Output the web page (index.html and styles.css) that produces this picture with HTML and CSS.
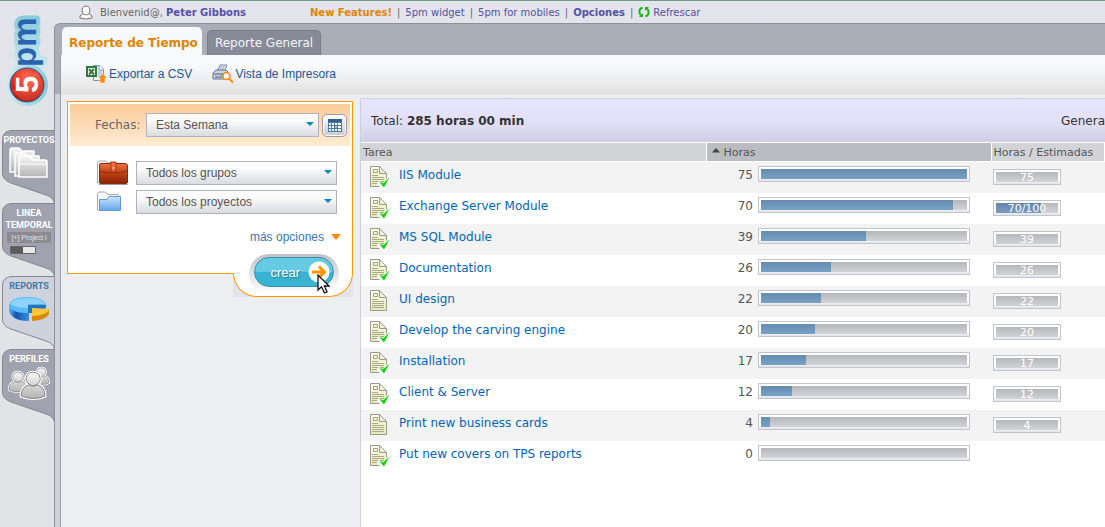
FILE: index.html
```html
<!DOCTYPE html>
<html lang="es">
<head>
<meta charset="utf-8">
<title>5pm - Reporte de Tiempo</title>
<link rel="stylesheet" href="styles.css">
</head>
<body>
<svg class="defs" width="0" height="0" aria-hidden="true">
  <defs>
    <linearGradient id="paper" x1="0" y1="0" x2="0" y2="1"><stop offset="0" stop-color="#fdfdea"/><stop offset="1" stop-color="#e6e8b8"/></linearGradient>
    <linearGradient id="metal" x1="0" y1="0" x2="0" y2="1"><stop offset="0" stop-color="#f6f6f6"/><stop offset="1" stop-color="#b4b4b4"/></linearGradient>
    <linearGradient id="sky" x1="0" y1="0" x2="0" y2="1"><stop offset="0" stop-color="#cfe6ff"/><stop offset="1" stop-color="#63a4e8"/></linearGradient>
    <linearGradient id="rust" x1="0" y1="0" x2="0" y2="1"><stop offset="0" stop-color="#f07a45"/><stop offset="0.5" stop-color="#c03f14"/><stop offset="1" stop-color="#8a2406"/></linearGradient>
    <linearGradient id="halo" x1="0" y1="0" x2="1" y2="0"><stop offset="0" stop-color="#cfeaf2"/><stop offset="1" stop-color="#86cbdc"/></linearGradient>
    <linearGradient id="blueside" x1="0" y1="0" x2="1" y2="0"><stop offset="0" stop-color="#66b4f4"/><stop offset="0.35" stop-color="#1550ae"/><stop offset="1" stop-color="#3c8fe0"/></linearGradient>
    <radialGradient id="red" cx="0.5" cy="0.25" r="0.8"><stop offset="0" stop-color="#ff6a50"/><stop offset="0.6" stop-color="#e02818"/><stop offset="1" stop-color="#b01008"/></radialGradient>
    <path id="tabshape" d="M55 0.500H11Q2.500 1.500 2.500 9.500V43Q2.500 50 11 53L46 65Q53 67 54.500 73H55Z"/>
    <g id="doc">
      <path d="M1.500 1.500H10.500L17.500 8.500V21.500H1.500Z" fill="url(#paper)" stroke="#9a9a92"/>
      <path d="M10.500 1.500V8.500H17.500Z" fill="#f2f3d8" stroke="#9a9a92"/>
      <path d="M4.500 4.500H8.500V7.500H4.500Z" fill="none" stroke="#a0a086"/>
      <path d="M3 10.500H9M3 12.500H15M3 14.500H15M3 16.500H15M3 18.500H15" stroke="#a9aa8a"/>
    </g>
    <g id="donedoc">
      <use href="#doc"/>
      <path d="M10 17L14 20L20 12V18L15 24L9 19Z" fill="#fff" stroke="#fff" stroke-width="2"/>
      <path d="M10 16.500L14 18.500L20.500 12.500L15 22.500Z" fill="#0bd20b"/>
    </g>
    <g id="person">
      <path d="M1 20Q1 12 8 11Q4 8 5 5Q6 1 10 1Q15 1 16 5Q17 9 13 11Q20 12 20 20Q11 24 1 20Z" fill="url(#metal)" stroke="#fff" stroke-width="2.500"/>
      <path d="M1 20Q1 12 8 11Q4 8 5 5Q6 1 10 1Q15 1 16 5Q17 9 13 11Q20 12 20 20Q11 24 1 20Z" fill="url(#metal)" stroke="#777" stroke-width=".7"/>
      <path d="M8 11Q10.500 13 13 11" fill="none" stroke="#888"/>
    </g>
  </defs>
</svg>
<div class="app">
  <aside class="sidebar">
    <a class="logo" href="#" aria-label="5pm">
      <svg width="50" height="96" viewBox="0 0 50 96">
        <g class="mark">
          <text class="mark-halo" transform="translate(36 56) rotate(-90)">pm</text>
          <circle cx="27" cy="74" r="21" fill="url(#halo)"/>
          <text class="mark-blue" transform="translate(36 56) rotate(-90)">pm</text>
          <circle cx="27" cy="74" r="17" fill="url(#red)" stroke="#1b5a9c"/>
          <path d="M12 80Q24 76 36 60Q46 70 42 82Q34 92 22 89Z" fill="#fff" opacity=".12"/>
          <text class="mark-five" transform="translate(38 82) rotate(-90)">5</text>
        </g>
      </svg>
    </a>
    <nav class="modules">
      <a class="module" href="#">
        <svg class="module-shape" width="55" height="73"><use href="#tabshape"/></svg>
        <span class="module-body"><span>PROYECTOS</span>
          <svg width="42" height="34" viewBox="0 0 42 34"><g fill="url(#metal)" stroke="#fff" stroke-width="1.500">
            <path d="M2 26V4Q2 2 4 2H11L14 5H26V26Z"/><path d="M7 30V9Q7 7 9 7H16L19 10H31V30Z"/><path d="M11 31V13Q11 10 14 10H21L25 14H37Q39 14 39 16V31Z"/></g>
            <path d="M11 18H39" stroke="#fff"/></svg></span>
      </a>
      <a class="module" href="#">
        <svg class="module-shape" width="55" height="73"><use href="#tabshape"/></svg>
        <span class="module-body"><span>LINEA<br>TEMPORAL</span>
          <span class="timeline">[+] Project i</span>
          <svg width="42" height="10" viewBox="0 0 42 10"><path d="M2.500 1.500H27.500V8.500H2.500Z" fill="#e8e8e8" stroke="#666"/><path d="M3 2H15V8H3Z" fill="#5c5c5c"/></svg></span>
      </a>
      <a class="module module-current" href="#" aria-current="page">
        <svg class="module-shape" width="55" height="73"><use href="#tabshape"/></svg>
        <span class="module-body"><span>REPORTS</span>
          <svg width="42" height="34" viewBox="0 0 42 34">
            <path d="M1 13V20Q5 29 21 29V17Z" fill="url(#blueside)"/>
            <path d="M1 13Q3 5 19 5Q36 5 38 13L20 13V21Q2 21 1 13Z" fill="#58baf8"/>
            <path d="M2 12Q5 6 19 6Q34 6 37 12L20 12V16Q8 16 2 12Z" fill="#8cd4ff"/>
            <path d="M20 13H38V16L26 21H20Z" fill="#2472c4"/>
            <path d="M24 17L41 18V22Q38 28 24 29Z" fill="#d98900"/><path d="M24 16L41 17Q40 23 24 24Z" fill="#ffc63a"/></svg></span>
      </a>
      <a class="module" href="#">
        <svg class="module-shape" width="55" height="73"><use href="#tabshape"/></svg>
        <span class="module-body"><span>PERFILES</span>
          <svg width="44" height="36" viewBox="0 0 44 36"><use href="#person" transform="translate(26 2) scale(.8)"/><use href="#person" transform="translate(1 6) scale(.95)"/><use href="#person" transform="translate(13 6) scale(1.250)"/></svg></span>
      </a>
    </nav>
  </aside>

  <div class="main">
    <header class="topbar">
      <svg width="14" height="15" viewBox="0 0 14 15"><path d="M1 13V11L4 8.500Q2.500 6 3.500 3Q5 1 7 1Q9 1 10.500 3Q11.500 6 10 8.500L13 11V13Q7 15 1 13Z" fill="#fafafa" stroke="#777"/><path d="M4 9Q7 11 10 9" fill="none" stroke="#888"/></svg>
      <p class="welcome">Bienvenid@, <a href="#"><b>Peter Gibbons</b></a></p>
      <nav class="toplinks">
        <a class="hot" href="#">New Features!</a><i>|</i><a href="#">5pm widget</a><i>|</i><a href="#">5pm for mobiles</a><i>|</i><a href="#"><b>Opciones</b></a><i>|</i><a class="refresh" href="#"><svg width="12" height="12" viewBox="0 0 12 12"><path d="M4.500 1.500Q1 3 1.500 6Q1.500 8 3 9.500M7.500 10.500Q11 9 10.500 6Q10.500 4 9 2.500" fill="none" stroke="#1bb51b" stroke-width="2"/><path d="M1 11H5V7ZM11 1H7V5Z" fill="#1bb51b"/></svg>Refrescar</a>
      </nav>
    </header>

    <div class="workspace">
      <nav class="tabs">
        <a class="tab tab-current" href="#" aria-current="page">Reporte de Tiempo</a>
        <a class="tab" href="#">Reporte General</a>
      </nav>
      <div class="content">
        <div class="toolbar">
          <a href="#"><svg width="22" height="20" viewBox="0 0 22 20"><path d="M7.500 1.500H14L17.500 5V16.500H7.500Z" fill="#e7effa" stroke="#7d93b8"/><path d="M13 1V6H18" fill="#fff" stroke="#7d93b8"/><path d="M12 8H16M12 10H16M12 12H16" stroke="#8eb0dc"/><path d="M0 2H11V13H0Z" fill="#2f7a3a"/><path d="M2 4H9V11H2Z" fill="#fff"/><path d="M3 5L8 10.500M8 5L3 10.500" stroke="#2f7a3a" stroke-width="2"/><path d="M16.500 9.500L21 14H19V19H14V14H12Z" fill="#ff8a00" stroke="#fff" stroke-width=".5"/></svg>Exportar a CSV</a>
          <a href="#"><svg width="22" height="20" viewBox="0 0 22 20"><path d="M5 8L8 1H15L12 8Z" fill="#f5f9ff" stroke="#6f86a8"/><path d="M8 3H13M7 5H12" stroke="#8aa3c8"/><path d="M1 9L4 6H14L16 8V13L13 15H1Z" fill="#c9d3e2" stroke="#66728a"/><path d="M2 10H13M3 13H10" stroke="#56617a"/><path d="M9 10H12V12H9Z" fill="#36c836"/><circle cx="14.500" cy="12" r="3.500" fill="#fff" stroke="#ff8a00" stroke-width="1.500"/><path d="M17 14.500L21 18.500" stroke="#ff8a00" stroke-width="2"/></svg>Vista de Impresora</a>
        </div>

        <div class="columns">
          <form class="filter">
            <div class="filter-box">
              <div class="dates">
                <label for="dates">Fechas:</label>
                <span class="drop"><select id="dates"><option>Esta Semana</option></select></span>
                <button class="calendar" type="button" aria-label="Calendario"><svg width="14" height="13" viewBox="0 0 14 13"><path d="M0 0H14V13H0Z" fill="#4a7aa6"/><path d="M0 0H14V3H0Z" fill="#33608e"/><path d="M1 4H3V6H1ZM4 4H6V6H4ZM7 4H9V6H7ZM10 4H13V6H10ZM1 7H3V9H1ZM4 7H6V9H4ZM10 7H13V9H10ZM1 10H3V12H1ZM4 10H6V12H4ZM7 10H9V12H7ZM10 10H13V12H10Z" fill="#fff"/><path d="M7 7H9V9H7Z" fill="#9fc0de"/></svg></button>
              </div>
              <div class="choices">
                <div class="choice">
                  <svg width="32" height="26" viewBox="0 0 32 26"><path d="M.5 23V3Q1 1 3 1H9L11 3H17V23Z" fill="#f5f5f5" stroke="#aaa"/><path d="M2 24H30L31 25H2Z" fill="#999"/><path d="M2.500 5Q2.500 3.500 4 3.500H12L14 2.500H18L19 3.500H28Q30.500 3.500 30.500 6V22Q30.500 23.500 29 23.500H4Q2.500 23.500 2.500 22Z" fill="url(#rust)" stroke="#8e2b0b"/><path d="M3 11Q15 15 30 11" stroke="#8e2b0b" fill="none"/><path d="M14 2H19V10L16.500 12L14 10Z" fill="#ee7040" stroke="#a83a12"/><path d="M15 8H18" stroke="#ffc0a0"/></svg>
                  <span class="drop"><select aria-label="Grupos"><option>Todos los grupos</option></select></span>
                </div>
                <div class="choice">
                  <svg width="32" height="24" viewBox="0 0 32 24"><path d="M.5 20V3.500L2 2H8L11 4.500H21L22 7V20Z" fill="#f7f7f7" stroke="#a9a9a9"/><path d="M2.500 20.500V9.500H10L12 6.500H23.500V20.500Z" fill="url(#sky)" stroke="#5c9be0"/></svg>
                  <span class="drop"><select aria-label="Proyectos"><option>Todos los proyectos</option></select></span>
                </div>
              </div>
              <a class="more" href="#">más opciones <svg width="10" height="6"><path d="M0 0H10L5 6Z" fill="#ff8a00"/></svg></a>
            </div>
            <div class="submit-back"><div class="submit-tab">
              <div class="submit-ring"><button class="submit" type="submit"><span>crear</span><svg width="22" height="22" viewBox="0 0 22 22"><circle cx="11" cy="11" r="10.500" fill="#fff"/><path d="M4 11H15M11 5.500L16.500 11L11 16.500" fill="none" stroke="#ff9300" stroke-width="3"/></svg></button>
              <svg class="pointer" width="14" height="20" viewBox="0 0 14 20" aria-hidden="true"><path d="M1 1V16L4.500 12.800L7.500 19L10 18L7.300 12H12Z" fill="#fff" stroke="#111" stroke-width="1.300"/></svg></div>
            </div></div>
          </form>

          <section class="results">
            <div class="summary"><p>Total: <b>285 horas 00 min</b></p><p>Genera</p></div>
            <table class="report">
              <colgroup><col class="c-task"><col class="c-hours"><col class="c-est"></colgroup>
              <thead><tr><th>Tarea</th><th class="sorted" aria-sort="ascending"><svg width="8" height="5"><path d="M0 4.500L4 0L8 4.500Z" fill="#444"/></svg>Horas</th><th>Horas / Estimadas</th></tr></thead>
              <tbody>
                <tr><td><a class="task" href="#"><svg width="22" height="25"><use href="#donedoc"/></svg>IIS Module</a></td><td><div class="hours"><span>75</span><div class="bar"><div><i style="width:100%"></i></div></div></div></td><td><div class="bar est"><div><span>75</span></div></div></td></tr>
                <tr><td><a class="task" href="#"><svg width="22" height="25"><use href="#donedoc"/></svg>Exchange Server Module</a></td><td><div class="hours"><span>70</span><div class="bar"><div><i style="width:93%"></i></div></div></div></td><td><div class="bar est"><div><i style="width:72%"></i><span>70/100</span></div></div></td></tr>
                <tr><td><a class="task" href="#"><svg width="22" height="25"><use href="#donedoc"/></svg>MS SQL Module</a></td><td><div class="hours"><span>39</span><div class="bar"><div><i style="width:51%"></i></div></div></div></td><td><div class="bar est"><div><span>39</span></div></div></td></tr>
                <tr><td><a class="task" href="#"><svg width="22" height="25"><use href="#donedoc"/></svg>Documentation</a></td><td><div class="hours"><span>26</span><div class="bar"><div><i style="width:34%"></i></div></div></div></td><td><div class="bar est"><div><span>26</span></div></div></td></tr>
                <tr><td><a class="task" href="#"><svg width="22" height="25"><use href="#doc"/></svg>UI design</a></td><td><div class="hours"><span>22</span><div class="bar"><div><i style="width:29%"></i></div></div></div></td><td><div class="bar est"><div><span>22</span></div></div></td></tr>
                <tr><td><a class="task" href="#"><svg width="22" height="25"><use href="#donedoc"/></svg>Develop the carving engine</a></td><td><div class="hours"><span>20</span><div class="bar"><div><i style="width:26%"></i></div></div></div></td><td><div class="bar est"><div><span>20</span></div></div></td></tr>
                <tr><td><a class="task" href="#"><svg width="22" height="25"><use href="#donedoc"/></svg>Installation</a></td><td><div class="hours"><span>17</span><div class="bar"><div><i style="width:22%"></i></div></div></div></td><td><div class="bar est"><div><span>17</span></div></div></td></tr>
                <tr><td><a class="task" href="#"><svg width="22" height="25"><use href="#donedoc"/></svg>Client &amp; Server</a></td><td><div class="hours"><span>12</span><div class="bar"><div><i style="width:15%"></i></div></div></div></td><td><div class="bar est"><div><span>12</span></div></div></td></tr>
                <tr><td><a class="task" href="#"><svg width="22" height="25"><use href="#doc"/></svg>Print new business cards</a></td><td><div class="hours"><span>4</span><div class="bar"><div><i style="width:4.500%"></i></div></div></div></td><td><div class="bar est"><div><span>4</span></div></div></td></tr>
                <tr><td><a class="task" href="#"><svg width="22" height="25"><use href="#donedoc"/></svg>Put new covers on TPS reports</a></td><td><div class="hours"><span>0</span><div class="bar"><div></div></div></div></td><td></td></tr>
              </tbody>
            </table>
          </section>
        </div>
      </div>
    </div>
  </div>
</div>
</body>
</html>
```
FILE: styles.css
```css
* { box-sizing: border-box; }
body { margin: 0; font-family: "DejaVu Sans", Verdana, sans-serif; font-size: 12px; color: #444; overflow-x: hidden; }
a { text-decoration: none; color: inherit; }
p { margin: 0; }
svg { display: block; flex: none; }
button, select { font: inherit; margin: 0; padding: 0; }
.defs { position: absolute; }

.app { display: flex; min-height: 100vh; border-top: 1px solid #6f9d8a; background: linear-gradient(#e4e4ec, #e0e4e7 100px); }
.sidebar { flex: none; width: 54px; padding-top: 10px; }
.mark text { font-family: "Liberation Sans", Arial, sans-serif; font-weight: bold; font-size: 33px; }
.mark .mark-halo { fill: #9bd4e2; stroke: url(#halo); stroke-width: 8px; stroke-linejoin: round; }
.mark .mark-blue { fill: #2a63b0; }
.mark .mark-five { fill: #fff; font-size: 31px; }
.modules { padding-top: 23px; }
.module { display: grid; height: 73px; font: bold 9px/12px Roboto, sans-serif; color: #fff; text-align: center; }
.module-shape, .module-body { grid-area: 1 / 1; }
.module-shape { fill: #a0a3af; stroke: #85868e; }
.module-body { z-index: 1; display: flex; flex-direction: column; align-items: center; padding: 4px 0 0 4px; width: 54px; }
.module-current { color: #4079aa; }
.module-current .module-shape { fill: #ced2dd; }
.timeline { width: 44px; height: 11px; margin: 1px 0 2px; white-space: nowrap; background: #8c8c90; color: #e4e4e4; font: 7px/11px "Liberation Sans", Arial, sans-serif; }

.main { flex: 1; min-width: 0; display: flex; flex-direction: column; }
.topbar { display: flex; align-items: center; height: 22px; padding-left: 25px; font-size: 10px; color: #666; white-space: nowrap; }
.topbar a { color: #544fa8; }
.welcome { padding-left: 7px; width: 217px; }
.toplinks { display: flex; align-items: center; gap: 5px; }
.toplinks i { font-style: normal; }
.topbar .hot { color: #dd8500; font-weight: bold; }
.refresh { display: flex; align-items: center; gap: 3px; }

.workspace { flex: 1; display: flex; flex-direction: column; padding-left: 5px; border: 1px solid #8e919c; border-width: 1px 0 0 1px; border-top-left-radius: 6px; background: linear-gradient(#a8adb8 70px, #ced2dd 70px); }
.tabs { display: flex; align-items: flex-end; gap: 5px; height: 31px; padding-left: 2px; }
.tab { height: 25px; padding: 0 7px; border: 1px solid #787d88; border-bottom: 0; border-radius: 5px 5px 0 0; background: #868b97; color: #f4f4f6; line-height: 25px; }
.tab-current { height: 28px; padding: 0 4px 0 7px; border: 0; border-radius: 5px 5px 0 0; background: #f8f9fb; color: #dd8500; font-weight: bold; line-height: 32px; }
.content { flex: 1; border-left: 1px solid #9a9ca8; background: #edeef2; }
.toolbar { display: flex; gap: 20px; height: 40px; padding: 0 25px 2px; align-items: center; background: linear-gradient(#f9fafc 25%, #e1e1e1); font: 12px "Liberation Sans", Arial, sans-serif; color: #1c5699; }
.toolbar a { display: flex; align-items: center; gap: 1px; }
.columns { display: flex; align-items: flex-start; padding: 3px 0 0 6px; }

.filter { flex: none; width: 286px; margin: 3px 7px 0 0; }
.filter-box { height: 173px; padding: 2px; border: 1px solid #f90; background: #fff; }
.dates { display: flex; align-items: center; height: 42px; padding: 0 3px 0 25px; background: linear-gradient(#fbcb9b, #feecd2); color: #666; }
.dates label { width: 51px; }
.dates .drop { margin-right: 3px; }
.drop { position: relative; flex: 1; height: 24px; }
.drop::after { content: ""; position: absolute; right: 5px; top: 9px; border: 4px solid transparent; border-top-color: #0088bb; border-bottom: 0; pointer-events: none; }
.drop select { appearance: none; width: 100%; height: 24px; padding: 0 9px; border: 1px solid #b0b2bc; border-radius: 0; background: linear-gradient(#fbfbfc 30%, #d9dbe1); color: #555; font: 12px "Liberation Sans", Arial, sans-serif; }
.calendar { display: grid; place-items: center; width: 25px; height: 23px; border: 1px solid #999ba5; border-radius: 5px; background: linear-gradient(#fff, #c8c8ce); box-shadow: inset 0 0 0 1px #fff; }
.choices { display: grid; gap: 5px; padding: 15px 13px 0 27px; }
.choice { display: flex; gap: 7px; height: 24px; align-items: center; }
.more { display: flex; justify-content: flex-end; align-items: center; gap: 7px; padding: 16px 9px 0 0; font: 12px "Liberation Sans", Arial, sans-serif; color: #3a78ac; }
.submit-back { width: 120px; height: 24px; margin: -1px 0 0 auto; background: #e3e3ee; }
.submit-tab { display: flex; align-items: flex-end; height: 24px; padding: 0 13px 0 15px; border: 1px solid #f90; border-top: 0; border-radius: 0 0 24px 24px; background: #fff; }
.submit-ring { position: relative; flex: none; width: 90px; height: 40px; margin-bottom: 2px; padding: 3px 5px; border-radius: 20px; background: linear-gradient(#bfc1c8, #e8e9ec 60%, #fff); }
.submit { display: flex; align-items: center; justify-content: flex-end; gap: 8px; width: 80px; height: 30px; padding-right: 3px; border: 1px solid #368ea6; border-radius: 15px; background: linear-gradient(#66cbe2 50%, #38b3d2 50%); color: #fff; font: 13px "Liberation Sans", Arial, sans-serif; text-shadow: 1px 1px 1px #287a90; }
.pointer { position: absolute; left: 68px; top: 20px; }

.results { flex: 1; min-width: 0; min-height: 429px; border: 1px solid #ced0dc; border-width: 1px 0 0 1px; background: #fff; overflow: hidden; }
.summary { display: flex; justify-content: space-between; align-items: center; height: 43px; padding-left: 10px; background: linear-gradient(#e8e6fe, #e2e0f8 55%, #d0cde4); color: #333; }
.report { width: 100%; table-layout: fixed; border-collapse: collapse; }
.c-task { width: 345px; }
.c-hours { width: 285px; }
th { height: 19px; padding: 0 2px; border: 1px solid #fff; border-width: 1px 1px 1px 0; background: #d2d3d6; background-clip: padding-box; color: #555; font-size: 11px; font-weight: normal; text-align: left; white-space: nowrap; }
th.sorted { background-color: #bbbcc1; padding-left: 5px; }
th svg { display: inline-block; margin-right: 4px; vertical-align: 3px; }
td { height: 31px; padding: 0; vertical-align: top; }
tbody tr:nth-child(odd) { background: #f3f3f3; }
.task { display: flex; align-items: flex-start; gap: 8px; padding: 3px 0 0 8px; height: 28px; color: #0066b8; line-height: 21px; white-space: nowrap; }
.hours { display: flex; gap: 5px; padding-top: 4px; line-height: 18px; color: #555; }
.hours > span { width: 47px; text-align: right; }
.bar { width: 212px; height: 16px; padding: 2px 2px 3px; border: 1px solid #c3c5ce; background: linear-gradient(#fff 70%, #e2e3ea); }
.bar > div { position: relative; height: 10px; background: linear-gradient(#b6b7bb, #d2d3d7); }
.bar i { display: block; height: 10px; background: linear-gradient(#668cae, #77a1c6); }
.est { width: 68px; margin: 7px 0 0 2px; }
.est i { background: linear-gradient(#6585ab, #7c9bc2); }
.est span { position: absolute; inset: 0; color: #fff; font-size: 11px; line-height: 11px; text-align: center; }
```
